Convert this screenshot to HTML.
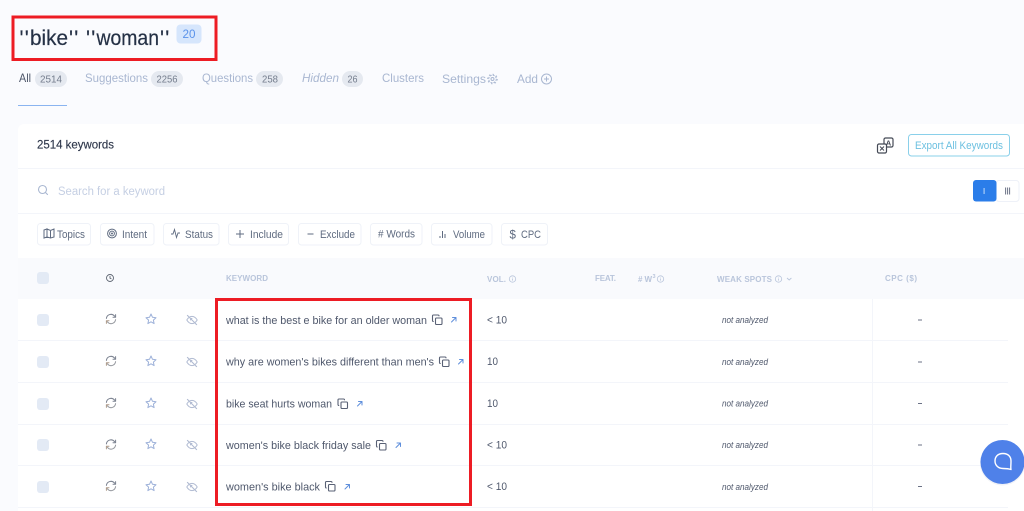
<!DOCTYPE html>
<html lang="en">
<head>
<meta charset="utf-8">
<title>Keywords</title>
<style>
html,body{margin:0;padding:0;width:1024px;height:511px;overflow:hidden;background:#fafbfe}
svg{display:block;position:absolute;left:0;top:0;filter:blur(.3px)}
text{font-family:"Liberation Sans",sans-serif}
.ttl{font-size:21px;fill:#253146;stroke:#253146;stroke-width:.2}
.tab{font-size:12px;fill:#a9b7d1}
.bt{font-size:10.5px;fill:#737c8c}
.chip{fill:#fff;stroke:#eff2f8}
.ct{font-size:11px;fill:#5f6b80}
.th{font-size:8px;font-weight:bold;fill:#b9c5db}
.kw{font-size:11px;fill:#4f586c}
.vol{font-size:11px;fill:#4f586c}
.na{font-size:9px;font-style:italic;fill:#4f586c}
.ln{stroke:#f3f5fa;stroke-width:1}
</style>
</head>
<body>
<svg width="1024" height="511" viewBox="0 0 1024 511" xmlns="http://www.w3.org/2000/svg">
<defs>
<g id="sync" fill="none" stroke-width="1" stroke-linecap="round" stroke-linejoin="round">
<path d="M-4.6 -0.6A4.6 4.6 0 0 1 3.4 -3.1L4.6 -2" stroke="#7b8290"/>
<path d="M4.6 -4.4V-1.8H2" stroke="#7b8290"/>
<path d="M4.6 0.6A4.6 4.6 0 0 1 -3.4 3.1L-4.6 2" stroke="#979aa0"/>
<path d="M-4.6 4.4V1.8H-2" stroke="#b09c8a"/>
</g>
<path id="star" d="M0 -5L1.5 -1.7L5 -1.3L2.4 1.1L3.1 4.6L0 2.8L-3.1 4.6L-2.4 1.1L-5 -1.3L-1.5 -1.7Z" fill="none" stroke="#9db1d9" stroke-width="1" stroke-linejoin="round"/>
<g id="eye" fill="none" stroke="#b1bbd2" stroke-width="1" stroke-linecap="round">
<path d="M-5.2 0C-3.4 -3 -1.5 -3.6 0 -3.6C1.5 -3.6 3.4 -3 5.2 0C3.4 3 1.5 3.6 0 3.6C-1.5 3.6 -3.4 3 -5.2 0Z"/>
<path d="M-1.6 0A1.6 1.6 0 0 1 0 -1.6"/>
<path d="M-4.6 -4.6L4.6 4.6" stroke-width="1.100"/>
</g>
<g id="copy" fill="none" stroke="#596175" stroke-width="1.100" stroke-linejoin="round">
<rect x="3" y="3" width="6.500" height="6.500" rx="1"/>
<path d="M6.500 1.200V1A1 1 0 0 0 5.500 0H1A1 1 0 0 0 0 1V5.500A1 1 0 0 0 1 6.500H1.200"/>
</g>
<g id="arrow" fill="none" stroke="#5f8fdc" stroke-width="1" stroke-linecap="round" stroke-linejoin="round">
<path d="M1 5.500L5.500 1M2 1H5.500V4.500"/>
</g>
<g id="info" fill="none" stroke="#b9c5db" stroke-width="0.800">
<circle r="3.200"/><path d="M0 -0.500V1.600M0 -1.600V-1.200"/>
</g>
</defs>

<!-- page header -->
<text x="19.500" y="45" class="ttl" style="letter-spacing:1.200px">''</text>
<text x="30" y="45" class="ttl" textLength="38" lengthAdjust="spacingAndGlyphs">bike</text>
<text x="69" y="45" class="ttl" style="letter-spacing:1.200px">''</text>
<text x="86" y="45" class="ttl" style="letter-spacing:1.200px">''</text>
<text x="96.500" y="45" class="ttl" textLength="62.500" lengthAdjust="spacingAndGlyphs">woman</text>
<text x="160" y="45" class="ttl" style="letter-spacing:1.200px">''</text>
<rect x="176.500" y="24.500" width="25" height="19" rx="4" fill="#d6e6fc"/>
<text x="182.500" y="38" font-size="12" fill="#5b93ea" textLength="13" lengthAdjust="spacingAndGlyphs">20</text>
<rect x="13" y="17" width="203" height="42.500" fill="none" stroke="#ed1c24" stroke-width="3"/>

<!-- tabs -->
<text x="19" y="82" class="tab" style="fill:#4b5468" textLength="12" lengthAdjust="spacingAndGlyphs">All</text>
<rect x="35" y="71" width="32" height="16" rx="8" fill="#e5e9f0"/>
<text x="40" y="82.500" class="bt" textLength="22" lengthAdjust="spacingAndGlyphs">2514</text>
<text x="85" y="82" class="tab" textLength="63" lengthAdjust="spacingAndGlyphs">Suggestions</text>
<rect x="151" y="71" width="32" height="16" rx="8" fill="#e5e9f0"/>
<text x="156.500" y="82.500" class="bt" textLength="21" lengthAdjust="spacingAndGlyphs">2256</text>
<text x="202" y="82" class="tab" textLength="51" lengthAdjust="spacingAndGlyphs">Questions</text>
<rect x="256" y="71" width="27" height="16" rx="8" fill="#e5e9f0"/>
<text x="262" y="82.500" class="bt" textLength="16" lengthAdjust="spacingAndGlyphs">258</text>
<text x="302" y="82" class="tab" style="font-style:italic" textLength="37" lengthAdjust="spacingAndGlyphs">Hidden</text>
<rect x="342" y="71" width="21" height="16" rx="8" fill="#e5e9f0"/>
<text x="347.500" y="82.500" class="bt" textLength="10" lengthAdjust="spacingAndGlyphs">26</text>
<text x="382" y="82" class="tab" textLength="42" lengthAdjust="spacingAndGlyphs">Clusters</text>
<text x="442" y="83" class="tab" textLength="44" lengthAdjust="spacingAndGlyphs">Settings</text>
<g fill="none" stroke="#a9b7d1" stroke-width="1">
<circle cx="492.500" cy="79" r="3.800" stroke-dasharray="2 1"/><circle cx="492.500" cy="79" r="4.800" stroke-dasharray="1.500 2.250"/><circle cx="492.500" cy="79" r="1.500"/>
</g>
<text x="517" y="83" class="tab" textLength="21" lengthAdjust="spacingAndGlyphs">Add</text>
<g fill="none" stroke="#a9b7d1" stroke-width="1"><circle cx="546.500" cy="79" r="5"/><path d="M546.500 76.500V81.500M544 79H549"/></g>
<rect x="18" y="105" width="49" height="1" fill="#8ab4f0"/>

<!-- card -->
<rect x="18" y="124" width="1020" height="400" rx="6" fill="#fff"/>
<text x="37" y="148.500" font-size="12" fill="#2f384c" stroke="#2f384c" stroke-width="0.150" textLength="77" lengthAdjust="spacingAndGlyphs">2514 keywords</text>

<!-- translate icon -->
<g fill="none" stroke="#454a56" stroke-width="1.200" stroke-linejoin="round">
<rect x="884" y="138" width="9" height="9" rx="1.500" fill="#fff"/>
<rect x="877.500" y="144" width="9" height="9" rx="1.500" fill="#fff"/>
</g>
<text x="885.800" y="145.500" font-size="7.500" fill="#454a56" font-weight="bold">A</text>
<path d="M880 146.500L884 150.500M884 146.500L880 150.500" stroke="#454a56" stroke-width="1"/>
<rect x="908.500" y="134.500" width="101" height="21.500" rx="3" fill="#fff" stroke="#8ad0ea"/>
<text x="915" y="149" font-size="11" fill="#6cc0e0" textLength="88" lengthAdjust="spacingAndGlyphs">Export All Keywords</text>

<line x1="18" y1="168.500" x2="1024" y2="168.500" class="ln"/>

<!-- search -->
<g fill="none" stroke="#a9b7d1" stroke-width="1.100" stroke-linecap="round"><circle cx="42.500" cy="189.500" r="4"/><path d="M45.500 192.500L47.500 194.500"/></g>
<text x="58" y="195" font-size="11.500" fill="#c5cfe3" textLength="107" lengthAdjust="spacingAndGlyphs">Search for a keyword</text>

<!-- toggle -->
<rect x="996" y="180.500" width="23" height="21" rx="3" fill="#fff" stroke="#eef1f8"/>
<rect x="973" y="180" width="23.500" height="21.500" rx="3" fill="#2b7de9"/>
<rect x="983.500" y="188" width="1.200" height="6" fill="#a9cbf6"/>
<path d="M1005.600 187.500V194.500M1007.600 187.500V194.500M1009.600 187.500V194.500" stroke="#6b7286" stroke-width="1"/>

<line x1="18" y1="213.500" x2="1024" y2="213.500" class="ln"/>

<!-- chips -->
<rect class="chip" x="37.500" y="223.500" width="53" height="21.500" rx="3"/>
<rect class="chip" x="100.500" y="223.500" width="53.500" height="21.500" rx="3"/>
<rect class="chip" x="163.500" y="223.500" width="55.500" height="21.500" rx="3"/>
<rect class="chip" x="228.500" y="223.500" width="60" height="21.500" rx="3"/>
<rect class="chip" x="298.500" y="223.500" width="62.500" height="21.500" rx="3"/>
<rect class="chip" x="370.500" y="223.500" width="51.500" height="21.500" rx="3"/>
<rect class="chip" x="431.500" y="223.500" width="60.500" height="21.500" rx="3"/>
<rect class="chip" x="501.500" y="223.500" width="46" height="21.500" rx="3"/>

<path d="M44 230L47 229V237L44 238ZM47 229L50.500 230.500L54 229V237L50.500 238L47 237ZM50.500 230.500V238" fill="none" stroke="#5f6b80" stroke-width="1"/>
<text x="57" y="238" class="ct" textLength="28" lengthAdjust="spacingAndGlyphs">Topics</text>
<g fill="none" stroke="#5f6b80"><circle cx="112" cy="233.500" r="4.400" stroke-width="1"/><circle cx="112" cy="233.500" r="2.400" stroke-width="1"/></g><circle cx="112" cy="233.500" r="1" fill="#5f6b80"/>
<text x="122" y="238" class="ct" textLength="25" lengthAdjust="spacingAndGlyphs">Intent</text>
<path d="M171 234H173L174.500 229.500L176.500 237.500L178 233H180" fill="none" stroke="#5f6b80" stroke-width="0.900"/>
<text x="185" y="238" class="ct" textLength="28" lengthAdjust="spacingAndGlyphs">Status</text>
<path d="M240 230V238M236 234H244" stroke="#5f6b80" stroke-width="1"/>
<text x="250" y="238" class="ct" textLength="33" lengthAdjust="spacingAndGlyphs">Include</text>
<path d="M307.500 234H313.500" stroke="#5f6b80" stroke-width="1"/>
<text x="320" y="238" class="ct" textLength="35" lengthAdjust="spacingAndGlyphs">Exclude</text>
<text x="378" y="237.500" class="ct" textLength="37" lengthAdjust="spacingAndGlyphs"># Words</text>
<path d="M440 238V236M442.500 238V231M445 238V234" stroke="#5f6b80" stroke-width="1"/>
<text x="453" y="238" class="ct" textLength="32" lengthAdjust="spacingAndGlyphs">Volume</text>
<text x="509.500" y="238.500" font-size="11.500" fill="#5f6b80">$</text>
<text x="521" y="238" class="ct" textLength="20" lengthAdjust="spacingAndGlyphs">CPC</text>

<!-- table header -->
<rect x="18" y="258" width="1006" height="41" fill="#f9fafd"/>
<rect x="37" y="272" width="12" height="12" rx="3" fill="#e3eaf5"/>
<g fill="none" stroke="#5f6673" stroke-width="0.900"><circle cx="110" cy="278" r="3.500"/><path d="M110 276V278.200L111.400 278.800"/></g>
<text x="226" y="281" class="th" textLength="42" lengthAdjust="spacing">KEYWORD</text>
<text x="487" y="282" class="th" textLength="19" lengthAdjust="spacing">VOL.</text>
<use href="#info" x="512.500" y="279"/>
<text x="595" y="281" class="th" textLength="21" lengthAdjust="spacing">FEAT.</text>
<text x="638" y="282" class="th" textLength="14" lengthAdjust="spacing">#W</text>
<text x="652.500" y="278" font-size="5.500" font-weight="bold" fill="#b9c5db">3</text>
<use href="#info" x="660.500" y="279"/>
<text x="717" y="282" class="th" textLength="55" lengthAdjust="spacing">WEAK SPOTS</text>
<use href="#info" x="778.500" y="279"/>
<path d="M787 278L789.200 280L791.400 278" fill="none" stroke="#b9c5db" stroke-width="0.900"/>
<text x="885" y="281" class="th" textLength="32" lengthAdjust="spacing">CPC ($)</text>

<!-- row lines -->
<line x1="18" y1="340.500" x2="1008" y2="340.500" class="ln"/>
<line x1="18" y1="382.500" x2="1008" y2="382.500" class="ln"/>
<line x1="18" y1="424.500" x2="1008" y2="424.500" class="ln"/>
<line x1="18" y1="465.500" x2="1008" y2="465.500" class="ln"/>
<line x1="18" y1="507.500" x2="1008" y2="507.500" class="ln"/>
<line x1="872.500" y1="299" x2="872.500" y2="511" class="ln"/>

<!-- row 1 -->
<rect x="37" y="314" width="12" height="12" rx="3" fill="#e3eaf5"/>
<use href="#sync" x="111" y="319"/><use href="#star" x="151" y="319"/><use href="#eye" x="192" y="320"/>
<text x="226" y="324" class="kw" textLength="201" lengthAdjust="spacingAndGlyphs">what is the best e bike for an older woman</text>
<use href="#copy" x="432.500" y="315"/><use href="#arrow" x="450.500" y="316.500"/>
<text x="487" y="323.500" class="vol" textLength="20" lengthAdjust="spacingAndGlyphs">&lt; 10</text>
<text x="722" y="323" class="na" textLength="46" lengthAdjust="spacingAndGlyphs">not analyzed</text>
<rect x="918" y="319.500" width="4" height="1" fill="#6b7286"/>

<!-- row 2 -->
<rect x="37" y="356" width="12" height="12" rx="3" fill="#e3eaf5"/>
<use href="#sync" x="111" y="361"/><use href="#star" x="151" y="361"/><use href="#eye" x="192" y="362"/>
<text x="226" y="365.500" class="kw" textLength="208" lengthAdjust="spacingAndGlyphs">why are women's bikes different than men's</text>
<use href="#copy" x="439.500" y="357"/><use href="#arrow" x="457.500" y="358.500"/>
<text x="487" y="365" class="vol" textLength="11" lengthAdjust="spacingAndGlyphs">10</text>
<text x="722" y="365" class="na" textLength="46" lengthAdjust="spacingAndGlyphs">not analyzed</text>
<rect x="918" y="361.500" width="4" height="1" fill="#6b7286"/>

<!-- row 3 -->
<rect x="37" y="398" width="12" height="12" rx="3" fill="#e3eaf5"/>
<use href="#sync" x="111" y="403"/><use href="#star" x="151" y="403"/><use href="#eye" x="192" y="404"/>
<text x="226" y="407.500" class="kw" textLength="106" lengthAdjust="spacingAndGlyphs">bike seat hurts woman</text>
<use href="#copy" x="338" y="399"/><use href="#arrow" x="356.500" y="400.500"/>
<text x="487" y="407" class="vol" textLength="11" lengthAdjust="spacingAndGlyphs">10</text>
<text x="722" y="406.500" class="na" textLength="46" lengthAdjust="spacingAndGlyphs">not analyzed</text>
<rect x="918" y="403" width="4" height="1" fill="#6b7286"/>

<!-- row 4 -->
<rect x="37" y="439" width="12" height="12" rx="3" fill="#e3eaf5"/>
<use href="#sync" x="111" y="444.500"/><use href="#star" x="151" y="444"/><use href="#eye" x="192" y="445"/>
<text x="226" y="449" class="kw" textLength="145" lengthAdjust="spacingAndGlyphs">women's bike black friday sale</text>
<use href="#copy" x="376.500" y="440.500"/><use href="#arrow" x="395" y="442"/>
<text x="487" y="448.500" class="vol" textLength="20" lengthAdjust="spacingAndGlyphs">&lt; 10</text>
<text x="722" y="448" class="na" textLength="46" lengthAdjust="spacingAndGlyphs">not analyzed</text>
<rect x="918" y="444.500" width="4" height="1" fill="#6b7286"/>

<!-- row 5 -->
<rect x="37" y="481" width="12" height="12" rx="3" fill="#e3eaf5"/>
<use href="#sync" x="111" y="486"/><use href="#star" x="151" y="486"/><use href="#eye" x="192" y="487"/>
<text x="226" y="490.500" class="kw" textLength="94" lengthAdjust="spacingAndGlyphs">women's bike black</text>
<use href="#copy" x="325.500" y="481.500"/><use href="#arrow" x="344" y="483.500"/>
<text x="487" y="490" class="vol" textLength="20" lengthAdjust="spacingAndGlyphs">&lt; 10</text>
<text x="722" y="490" class="na" textLength="46" lengthAdjust="spacingAndGlyphs">not analyzed</text>
<rect x="918" y="486" width="4" height="1" fill="#6b7286"/>

<!-- red box -->
<rect x="216.500" y="299.500" width="254" height="205" fill="none" stroke="#ed1c24" stroke-width="3"/>

<!-- chat bubble -->
<circle cx="1002.500" cy="463" r="22.500" fill="#e6e9f2" opacity="0.6"/>
<circle cx="1002.500" cy="462" r="22" fill="#4f81e9"/>
<path d="M1003 453.500C997.500 453.500 995 457 995 461C995 465 998 468.500 1003 468.500C1005 468.500 1008 468.500 1011 469.500C1010.500 467.500 1011 465.500 1011 461C1011 457 1008.500 453.500 1003 453.500Z" fill="none" stroke="#fff" stroke-width="1.400" stroke-linejoin="round"/>
</svg>
</body>
</html>
